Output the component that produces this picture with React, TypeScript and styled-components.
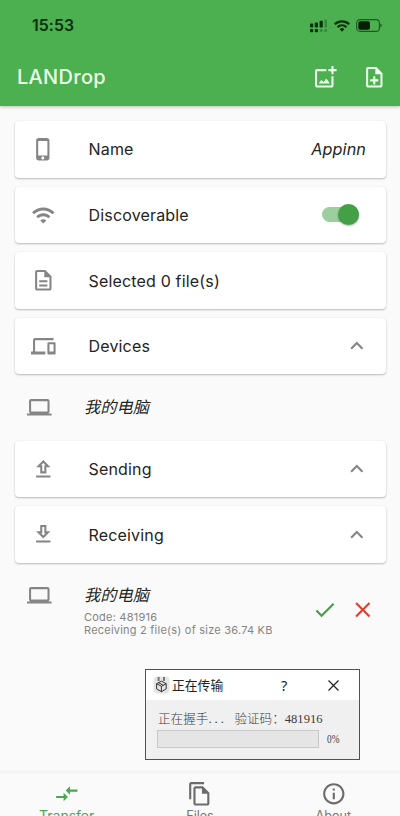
import React from "react";
import styled, { createGlobalStyle } from "styled-components";

const Global = createGlobalStyle`
  * { box-sizing: border-box; }
  html, body { margin: 0; padding: 0; overflow: hidden; background: #fafafa; }
  svg { flex: none; display: block; }
`;

const Screen = styled.div`
  position: relative;
  width: 400px;
  height: 816px;
  overflow: hidden;
  display: flex;
  flex-direction: column;
  background: #fafafa;
  color: #242424;
  font-family: Inter, "Noto Sans CJK SC", sans-serif;
`;

const Header = styled.header`
  flex: none;
  height: 106px;
  background: #4caf50;
  box-shadow: 0 1px 3px rgba(110, 120, 80, 0.45);
`;

const StatusBar = styled.div`
  height: 51px;
  padding: 0 18px 0 32px;
  display: flex;
  align-items: center;
  justify-content: space-between;
`;

const Clock = styled.span`
  font-size: 15.8px;
  font-weight: 600;
  letter-spacing: 0.1px;
  color: #06300a;
`;

const StatusIcons = styled.div`
  display: flex;
  align-items: center;
  gap: 6px;
`;

const AppBar = styled.div`
  height: 52px;
  padding: 0 13px 0 17px;
  display: flex;
  align-items: center;
  justify-content: space-between;
`;

const Title = styled.h1`
  margin: 0;
  font-size: 20px;
  font-weight: 500;
  letter-spacing: 0.3px;
  color: #eaffea;
`;

const Actions = styled.div`
  display: flex;
  gap: 25px;
`;

const Main = styled.main`
  flex: 1;
  padding: 15px 14px 0 15px;
  display: flex;
  flex-direction: column;
  gap: 8.65px;
`;

const Card = styled.section`
  flex: none;
  height: 56.5px;
  margin-bottom: 0.5px;
  padding: 0 20px 0 16px;
  display: flex;
  align-items: center;
  background: #fff;
  border-radius: 4px;
  box-shadow: 0 1px 2px rgba(0, 0, 0, 0.26), 0 0 1px rgba(0, 0, 0, 0.08);
`;

const Leading = styled.div`
  width: 57.5px;
  display: flex;
`;

const Label = styled.span`
  flex: 1;
  font-size: 16px;
  letter-spacing: 0.17px;
`;

const DeviceName = styled.em`
  font-size: 16.2px;
  letter-spacing: 0.1px;
`;

const Chevron = styled.div`
  display: flex;
  margin-right: -4px;
`;

const Track = styled.div`
  width: 37px;
  height: 15px;
  margin-right: 7px;
  display: flex;
  align-items: center;
  justify-content: flex-end;
  border-radius: 8px;
  background: #9dce9f;
`;

const Thumb = styled.div`
  flex: none;
  width: 21px;
  height: 21px;
  border-radius: 50%;
  background: #43a047;
  box-shadow: 0 1px 2px rgba(0, 0, 0, 0.3);
`;

const Peer = styled.div<{ $height: number }>`
  flex: none;
  height: ${(p) => p.$height}px;
  padding: 0 10px 0 12px;
  display: flex;
  align-items: flex-start;
`;

const PeerIcon = styled.div`
  width: 57px;
  padding-top: 11px;
  display: flex;
`;

const PeerText = styled.div`
  flex: 1;
  padding-top: 11px;
  display: flex;
  flex-direction: column;
  line-height: 25px;
  white-space: nowrap;
`;

const Details = styled.div`
  padding-top: 3px;
  display: flex;
  flex-direction: column;
  font-size: 11px;
  line-height: 13.3px;
  letter-spacing: 0.22px;
  color: #858585;
`;

const Answer = styled.div`
  padding-top: 25px;
  display: flex;
  gap: 13px;
`;

const Nav = styled.nav`
  flex: none;
  height: 43px;
  display: grid;
  grid-template-columns: repeat(3, 1fr);
  background: #fafafa;
  box-shadow: 0 -1px 3px rgba(0, 0, 0, 0.06);
`;

const Tab = styled.div<{ $active?: boolean }>`
  padding-top: 8px;
  display: flex;
  flex-direction: column;
  align-items: center;
  color: ${(p) => (p.$active ? "#4ca551" : "#757575")};
  font-size: ${(p) => (p.$active ? 14 : 12.6)}px;
  line-height: 17px;
  white-space: nowrap;
`;

const Dialog = styled.div`
  position: absolute;
  left: 145px;
  top: 669px;
  width: 215px;
  height: 91px;
  border: 1px solid #4a5068;
  background: #f0f0f0;
  color: #222;
`;

const DialogBar = styled.div`
  height: 30px;
  padding: 0 20px 0 7px;
  display: flex;
  align-items: center;
  background: #fff;
`;

const DialogTitle = styled.span`
  flex: 1;
  padding-left: 2px;
  font-family: "Noto Sans CJK SC", sans-serif;
  font-size: 12.8px;
  line-height: 30px;
`;

const Help = styled.span`
  width: 47px;
  font-family: "Noto Sans", sans-serif;
  font-size: 14.5px;
`;

const DialogBody = styled.div`
  padding: 9px 18px 0 11px;
  font-family: "Liberation Serif", "Noto Sans CJK SC", serif;
  font-size: 12.6px;
  line-height: 20px;
  color: #3c3c3c;
`;

const Message = styled.div`
  display: flex;
  padding-left: 1px;
  font-weight: 300;
  white-space: nowrap;
`;

const Dots = styled.span`
  width: 26px;
  letter-spacing: 3.1px;
`;

const Progress = styled.div`
  display: flex;
  align-items: center;
  gap: 8px;
`;

const Bar = styled.div`
  flex: none;
  width: 162px;
  height: 18px;
  border: 1px solid #c9c9c9;
  background: #e5e5e5;
`;

const Percent = styled.span`
  flex: none;
  transform: scaleX(0.74);
  transform-origin: left;
`;

const paths = {
  addPhoto:
    "M18 20H4V6h9V4H4c-1.1 0-2 .9-2 2v14c0 1.1.9 2 2 2h14c1.1 0 2-.9 2-2v-9h-2v9zm-7.79-3.17l-1.96-2.36L5.5 18h11l-3.54-4.71zM20 4V1h-2v3h-3v2h3v3h2V6h3V4h-3z",
  addNote:
    "M13 11h-2v3H8v2h3v3h2v-3h3v-2h-3zm1-9H6c-1.1 0-2 .9-2 2v16c0 1.1.89 2 1.99 2H18c1.1 0 2-.9 2-2V8l-6-6zm4 18H6V4h7v5h5v11z",
  phone:
    "M15.5 1h-8C6.12 1 5 2.12 5 3.5v17C5 21.88 6.12 23 7.5 23h8c1.38 0 2.5-1.12 2.5-2.5v-17C18 2.12 16.88 1 15.5 1zm-4 21c-.83 0-1.5-.67-1.5-1.5s.67-1.5 1.5-1.5 1.5.67 1.5 1.5-.67 1.5-1.5 1.5zm4.5-4H7V4h9v14z",
  wifi: "M1 9l2 2c4.97-4.97 13.03-4.97 18 0l2-2C16.93 2.93 7.08 2.93 1 9zm8 8l3 3 3-3c-1.65-1.66-4.34-1.66-6 0zm-4-4l2 2c2.76-2.76 7.24-2.76 10 0l2-2C15.14 9.14 8.87 9.14 5 13z",
  file: "M8 16h8v2H8zm0-4h8v2H8zm6-10H6c-1.1 0-2 .9-2 2v16c0 1.1.89 2 1.99 2H18c1.1 0 2-.9 2-2V8l-6-6zm4 18H6V4h7v5h5v11z",
  devices:
    "M4 6h18V4H4c-1.1 0-2 .9-2 2v11H0v3h14v-3H4V6zm19 2h-6c-.55 0-1 .45-1 1v10c0 .55.45 1 1 1h6c.55 0 1-.45 1-1V9c0-.55-.45-1-1-1zm-1 9h-4v-7h4v7z",
  laptop:
    "M20 18c1.1 0 2-.9 2-2V6c0-1.1-.9-2-2-2H4c-1.1 0-2 .9-2 2v10c0 1.1.9 2 2 2H0v2h24v-2h-4zM4 6h16v10H4V6z",
  upload:
    "M5 10h4v6h6v-6h4l-7-7-7 7zm7-4.17L14.17 8H13v6h-2V8H9.83L12 5.83zM5 18h14v2H5z",
  download:
    "M19 9h-4V3H9v6H5l7 7 7-7zm-8 2V5h2v6h1.17L12 13.17 9.83 11H11zM5 18h14v2H5z",
  chevron: "M12 8l-6 6 1.41 1.41L12 10.83l4.59 4.58L18 14z",
  check: "M9 16.17L4.83 12l-1.42 1.41L9 19 21 7l-1.41-1.41z",
  close:
    "M19 6.41L17.59 5 12 10.59 6.41 5 5 6.41 10.59 12 5 17.59 6.41 19 12 13.41 17.59 19 19 17.59 13.41 12z",
  transfer: "M9.01 14H2v2h7.01v3L13 15l-3.99-4v3zm5.98-1v-3H22V8h-7.01V5L11 9l3.99 4z",
  copies:
    "M16 1H4c-1.1 0-2 .9-2 2v14h2V3h12V1zm-1 4H8c-1.1 0-1.99.9-1.99 2L6 21c0 1.1.89 2 1.99 2H19c1.1 0 2-.9 2-2V11l-6-6zM8 21V7h6v5h5v9H8z",
  info: "M11 7h2v2h-2zm0 4h2v6h-2zm1-9C6.48 2 2 6.48 2 12s4.48 10 10 10 10-4.48 10-10S17.52 2 12 2zm0 18c-4.41 0-8-3.59-8-8s3.59-8 8-8 8 3.59 8 8-3.59 8-8 8z",
};

type IconName = keyof typeof paths;

function Icon({ name, color = "#858585", size = 24.6 }: { name: IconName; color?: string; size?: number }) {
  return (
    <svg width={size} height={size} viewBox="0 0 24 24" fill={color}>
      <path d={paths[name]} />
    </svg>
  );
}

function Signal() {
  return (
    <svg width="18" height="14" viewBox="0 0 18 14" fill="#06300a">
      <rect x="0" y="4.6" width="3.2" height="3.9" rx="0.8" />
      <rect x="4.8" y="3.4" width="3.2" height="5.100" rx="0.8" />
      <rect x="9.6" y="1.8" width="3.2" height="6.7" rx="0.8" />
      <rect x="14.4" y="0.5" width="2.6" height="8" rx="0.8" opacity="0.3" />
      <rect x="0" y="10" width="3.2" height="3.2" rx="0.8" />
      <rect x="4.8" y="10" width="3.2" height="3.2" rx="0.8" />
      <rect x="9.8" y="10" width="2.6" height="3" rx="0.8" opacity="0.3" />
      <rect x="14.4" y="10" width="2.6" height="3" rx="0.8" opacity="0.3" />
    </svg>
  );
}

function StatusWifi() {
  return (
    <svg width="16" height="12" viewBox="0 0 16 12" fill="none" stroke="#06300a">
      <path d="M0.8 4.300a10.200 10.200 0 0 1 14.400 0" strokeWidth="2.300" />
      <path d="M3.500 7.200a6.300 6.300 0 0 1 9 0" strokeWidth="2.100" />
      <path d="M5.700 9.300a3.200 3.200 0 0 1 4.600 0L8 11.800z" fill="#06300a" stroke="none" />
    </svg>
  );
}

function Battery() {
  return (
    <svg width="26" height="13" viewBox="0 0 26 13">
      <rect x="0.6" y="0.6" width="22.8" height="11.8" rx="3.4" fill="none" stroke="#1d5a22" strokeWidth="1.1" />
      <rect x="2.3" y="2.3" width="11.600" height="8.4" rx="1.8" fill="#041f06" />
      <path d="M24.4 4.6q1.4.7 1.4 1.9t-1.4 1.9z" fill="#1d5a22" />
    </svg>
  );
}

function DropLogo() {
  return (
    <svg width="17" height="18" viewBox="0 0 17 18" fill="none" stroke="#333" strokeWidth="1">
      <rect x="0.5" y="0.5" width="16" height="17" rx="4" fill="#e4e4e4" stroke="none" />
      <path d="M5.6 1v4M11 1v4" stroke="#777" strokeWidth="2" />
      <path d="M8.4 5.2l4.8 2.5v5.2l-4.8 2.8-4.8-2.8V7.7zM3.6 7.7l4.8 2.6 4.8-2.6M8.4 10.3v5.4M5.5 6.7l4.8 2.6" />
    </svg>
  );
}

function CloseMark() {
  return (
    <svg width="11" height="11" viewBox="0 0 11 11" stroke="#222" strokeWidth="1.2">
      <path d="M0.5 0.5l10 10M10.5 0.5l-10 10" />
    </svg>
  );
}

function Section({ icon, label, children }: { icon: IconName; label: string; children?: React.ReactNode }) {
  return (
    <Card>
      <Leading>
        <Icon name={icon} />
      </Leading>
      <Label>{label}</Label>
      {children}
    </Card>
  );
}

const Collapse = () => (
  <Chevron>
    <Icon name="chevron" size={25.6} />
  </Chevron>
);

export default function App() {
  return (
    <Screen>
      <Global />
      <Header>
        <StatusBar>
          <Clock>15:53</Clock>
          <StatusIcons>
            <Signal />
            <StatusWifi />
            <Battery />
          </StatusIcons>
        </StatusBar>
        <AppBar>
          <Title>LANDrop</Title>
          <Actions>
            <Icon name="addPhoto" color="#eeffee" />
            <Icon name="addNote" color="#eeffee" />
          </Actions>
        </AppBar>
      </Header>
      <Main>
        <Section icon="phone" label="Name">
          <DeviceName>Appinn</DeviceName>
        </Section>
        <Section icon="wifi" label="Discoverable">
          <Track>
            <Thumb />
          </Track>
        </Section>
        <Section icon="file" label="Selected 0 file(s)" />
        <Section icon="devices" label="Devices">
          <Collapse />
        </Section>
        <Peer $height={48.5}>
          <PeerIcon>
            <Icon name="laptop" />
          </PeerIcon>
          <PeerText>
            <DeviceName>我的电脑</DeviceName>
          </PeerText>
        </Peer>
        <Section icon="upload" label="Sending">
          <Collapse />
        </Section>
        <Section icon="download" label="Receiving">
          <Collapse />
        </Section>
        <Peer $height={80}>
          <PeerIcon>
            <Icon name="laptop" />
          </PeerIcon>
          <PeerText>
            <DeviceName>我的电脑</DeviceName>
            <Details>
              <span>Code: 481916</span>
              <span>Receiving 2 file(s) of size 36.74 KB</span>
            </Details>
          </PeerText>
          <Answer>
            <Icon name="check" color="#43a047" size={25.6} />
            <Icon name="close" color="#d9402f" size={25.6} />
          </Answer>
        </Peer>
      </Main>
      <Nav>
        <Tab $active>
          <Icon name="transfer" color="#4ca551" size={25.6} />
          Transfer
        </Tab>
        <Tab>
          <Icon name="copies" color="#6c6c6c" size={25.6} />
          Files
        </Tab>
        <Tab>
          <Icon name="info" color="#6c6c6c" size={25.6} />
          About
        </Tab>
      </Nav>
      <Dialog>
        <DialogBar>
          <DropLogo />
          <DialogTitle>正在传输</DialogTitle>
          <Help>?</Help>
          <CloseMark />
        </DialogBar>
        <DialogBody>
          <Message>
            正在握手<Dots>...</Dots>验证码：481916
          </Message>
          <Progress>
            <Bar />
            <Percent>0%</Percent>
          </Progress>
        </DialogBody>
      </Dialog>
    </Screen>
  );
}
